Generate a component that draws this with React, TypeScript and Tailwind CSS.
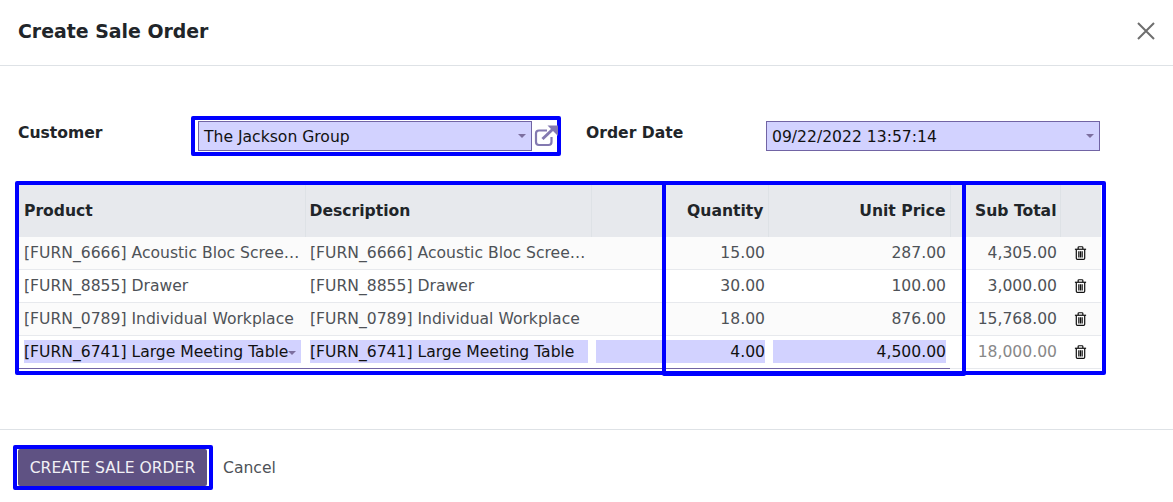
const rows = [
  ["[FURN_6666] Acoustic Bloc Screens", "[FURN_6666] Acoustic Bloc Screens", "15.00", "287.00", "4,305.00"],
  ["[FURN_8855] Drawer", "[FURN_8855] Drawer", "30.00", "100.00", "3,000.00"],
  ["[FURN_0789] Individual Workplace", "[FURN_0789] Individual Workplace", "18.00", "876.00", "15,768.00"],
];

function Caret({ className = "" }: { className?: string }) {
  return (
    <svg width="8" height="4" viewBox="0 0 8 4" className={`shrink-0 ${className}`}>
      <path d="M0 0h8L4 4z" fill="#7c6f9f" />
    </svg>
  );
}

function Trash() {
  return (
    <svg width="13" height="14" viewBox="0 0 13 15" className="ml-[14px] block" fill="none" stroke="#111" strokeWidth="1.3">
      <path d="M0.5 3.5h12" />
      <path d="M4 3.2V1.6Q4 .8 4.8 .8h3.4Q9 .8 9 1.6v1.6" />
      <path d="M2 3.5v9.6q0 1.2 1.2 1.2h6.6q1.2 0 1.2-1.2V3.5" />
      <path d="M4.7 5.6v6.6M6.5 5.6v6.6M8.3 5.6v6.6" />
    </svg>
  );
}

const th = "h-[51px] pt-[2px] pl-[5px] font-bold text-[#212529] bg-[#e7e9ed] border-r border-[#dee2e6]";
const cell = "h-[33px] border-t border-[#e7e9ed] text-[#4e5257] whitespace-nowrap overflow-hidden text-ellipsis";
const td = `${cell} pl-[5px] pr-[5px] pt-[2px]`;
const num = `${cell} pl-[5px] pt-[2px] text-right`;
const input = "h-[33px] pl-[5px] border-t border-t-[#e7e9ed] border-b border-b-[#7164a4] text-[#111]";
const box = "h-[23px] pt-[2px] bg-[#d2d2ff] flex items-center whitespace-nowrap";

export default function App() {
  return (
    <div className="w-[1173px] h-[502px] bg-white flex flex-col text-[15.6px] text-[#212529] font-['DejaVu_Sans',sans-serif] overflow-hidden">
      <header className="h-[66px] shrink-0 border-b border-[#dee2e6] flex items-center justify-between pl-[18px] pr-[18px]">
        <h1 className="text-[18.9px] font-bold text-[#212529] -mt-[3px]">Create Sale Order</h1>
        <svg width="18" height="18" viewBox="0 0 18 18" className="-mt-[4px]" stroke="#6e6e6e" strokeWidth="2" fill="none">
          <path d="M1 1l16 16M17 1L1 17" />
        </svg>
      </header>

      <main className="h-[364px] shrink-0 pt-[50px] border-b border-[#dee2e6]">
        <div className="flex pl-[18px]">
          <label className="w-[173px] font-bold pt-[5px] leading-[24px]">Customer</label>
          <div className="w-[370px] h-[40px] border-4 border-[#0000ff] rounded-[2px] pl-[3px] flex items-center gap-[2px]">
            <div className="w-[334px] h-[30px] shrink-0 border border-[#7164a4] bg-[#d2d2ff] flex items-center justify-between pl-[5px] pr-[5px] text-[#111]">
              <span className="pt-[4px]">The Jackson Group</span>
              <Caret />
            </div>
            <svg width="24" height="22" viewBox="0 0 24 22" className="shrink-0" fill="none">
              <path d="M17.5 12v5q0 3-3 3H5q-3 0-3-3V8.5q0-3 3-3h8" stroke="#8379b0" strokeWidth="2.2" />
              <path d="M8.5 14L19 4" stroke="#8379b0" strokeWidth="3" />
              <path d="M13.5 0.5H24V11z" fill="#8379b0" />
            </svg>
          </div>
          <label className="ml-[25px] w-[180px] font-bold pt-[5px] leading-[24px]">Order Date</label>
          <div className="mt-[5px] w-[334px] h-[30px] border border-[#7164a4] bg-[#d2d2ff] flex items-center justify-between pl-[5px] pr-[5px] text-[#111]">
            <span className="pt-[4px]">09/22/2022 13:57:14</span>
            <Caret />
          </div>
        </div>

        <div className="relative mt-[25px] ml-[15px] w-[1091px] h-[194px] border-4 border-[#0000ff] rounded-[2px]">
          <table className="table-fixed border-collapse w-[1082px] text-[15.6px]">
            <colgroup>
              <col className="w-[286px]" />
              <col className="w-[286px]" />
              <col className="w-[177px]" />
              <col className="w-[182px]" />
              <col className="w-[110px]" />
              <col className="w-[41px]" />
            </colgroup>
            <thead>
              <tr>
                <th className={`${th} pr-[5px] text-left`}>Product</th>
                <th className={`${th} !pl-[4px] pr-[5px] text-left`}>Description</th>
                <th className={`${th} pr-[4px] text-right`}>Quantity</th>
                <th className={`${th} pr-[4px] text-right`}>Unit Price</th>
                <th className={`${th} pr-[3px] text-right`}>Sub Total</th>
                <th className="bg-[#e7e9ed]"></th>
              </tr>
            </thead>
            <tbody>
              {rows.map((r, i) => (
                <tr key={r[0]} className={i % 2 === 0 ? "bg-[#fbfbfb]" : "bg-white"}>
                  <td className={td}>{r[0]}</td>
                  <td className={td}>{r[1]}</td>
                  <td className={`${num} pr-[3px]`}>{r[2]}</td>
                  <td className={`${num} pr-[4px]`}>{r[3]}</td>
                  <td className={`${num} pr-[3px]`}>{r[4]}</td>
                  <td className={cell}><Trash /></td>
                </tr>
              ))}
              <tr>
                <td className={`${input} pr-[4px]`}>
                  <div className={`${box} pr-[5px]`}>
                    <span>[FURN_6741] Large Meeting Table</span>
                    <Caret />
                  </div>
                </td>
                <td className={`${input} pr-[3px]`}>
                  <div className={box}>[FURN_6741] Large Meeting Table</div>
                </td>
                <td className={`${input} pr-[3px]`}>
                  <div className={`${box} justify-end`}>4.00</div>
                </td>
                <td className={`${input} pr-[4px]`}>
                  <div className={`${box} justify-end`}>4,500.00</div>
                </td>
                <td className={`${num} pr-[3px] !text-[#888888] border-b border-b-[#e7e9ed]`}>18,000.00</td>
                <td className={`${cell} border-b border-b-[#e7e9ed]`}><Trash /></td>
              </tr>
            </tbody>
          </table>
          <div className="absolute left-[643px] -top-[4px] w-[304px] h-[195px] border-4 border-[#0000ff] rounded-[2px]"></div>
        </div>
      </main>

      <footer className="flex items-center pl-[13px] pt-[15px]">
        <div className="w-[200px] h-[45px] border-4 border-[#0000ff] rounded-[2px] pl-px pr-[2px] flex items-center">
          <button className="w-full h-[37px] pt-[2px] bg-[#5f5283] text-[#f1f0f5] rounded-[2px] text-[15.6px]">CREATE SALE ORDER</button>
        </div>
        <span className="ml-[10px] pt-[2px] text-[#4e5257]">Cancel</span>
      </footer>
    </div>
  );
}
